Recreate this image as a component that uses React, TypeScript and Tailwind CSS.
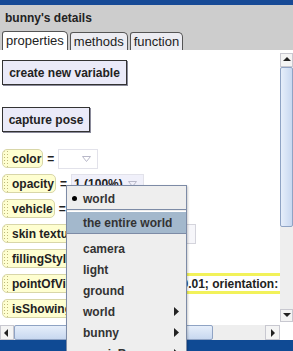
import { ReactNode } from "react";

// little dotted grip on the left edge of each property tile
function Grip() {
  return (
    <span className="h-full w-[7px] shrink-0 rounded-l-[5px] bg-[radial-gradient(#bdb67a_0.8px,transparent_0.9px)] bg-[length:3px_3px]" />
  );
}

function Tile({ label }: { label: string }) {
  return (
    <div className="flex h-[19px] shrink-0 items-center rounded-[5px] border border-[#d8d6a8] bg-[#fefed0] pr-[1px]">
      <Grip />
      <span className="pl-[2px] text-[12px] font-bold leading-none text-[#222]">{label}</span>
    </div>
  );
}

function Combo({ children, w, tint }: { children?: ReactNode; w: string; tint?: boolean }) {
  return (
    <div
      className={`flex h-[20px] shrink-0 items-center justify-between border border-[#e2e2ea] pl-[2px] pr-[6px] ${w} ${
        tint ? "bg-[#f0f0fa]" : "bg-white"
      }`}
    >
      <span className="text-[12px] font-bold text-[#222]">{children}</span>
      <svg width="9" height="6" viewBox="0 0 9 6">
        <path d="M0.5 0.5 L8.5 0.5 L4.5 5.5 Z" fill="none" stroke="#b8b8c8" strokeWidth="1" />
      </svg>
    </div>
  );
}

function Row({ label, children }: { label: string; children?: ReactNode }) {
  return (
    <div className="flex h-[19px] items-center gap-[4px]">
      <Tile label={label} />
      <span className="text-[12px] font-bold text-[#222]">=</span>
      {children}
    </div>
  );
}

function Arrow({ dir }: { dir: "up" | "down" | "left" | "right" }) {
  const d = {
    up: "M1 6 L5 2 L9 6 Z",
    down: "M1 2 L5 6 L9 2 Z",
    left: "M6 1 L2 5 L6 9 Z",
    right: "M3 1 L7 5 L3 9 Z",
  }[dir];
  return (
    <svg width="10" height="10" viewBox="0 0 10 10">
      <path d={d} fill="#222" />
    </svg>
  );
}

function Item({ children, sub, bullet, active }: { children: string; sub?: boolean; bullet?: boolean; active?: boolean }) {
  return (
    <div
      className={`relative flex h-[21px] shrink-0 items-center pl-[16px] pr-[6px] text-[12px] font-bold text-[#333] ${
        active ? "bg-[#a3b8cc]" : ""
      }`}
    >
      {bullet && <span className="absolute left-[5px] top-[8px] h-[5px] w-[5px] rounded-full bg-black" />}
      <span className="flex-1">{children}</span>
      {sub && (
        <svg width="6" height="9" viewBox="0 0 6 9">
          <path d="M0 0 L5 4.5 L0 9 Z" fill="#222" />
        </svg>
      )}
    </div>
  );
}

export default function App() {
  return (
    <div className="relative flex h-[351px] w-[293px] flex-col overflow-hidden bg-[#cdcdcd] font-['Liberation_Sans',Arial,sans-serif]">
      <div className="h-[5px] shrink-0 bg-[#174a96]" />

      {/* header */}
      <div className="flex h-[25px] shrink-0 items-center px-[5px] text-[12px] font-bold text-[#222]">bunny's details</div>

      {/* tabs */}
      <div className="flex h-[20px] shrink-0 items-end gap-[2px] pl-[2px]">
        <div className="flex h-[19px] items-center rounded-tl-[3px] rounded-tr-[5px] border-l border-r border-t border-[#555] bg-white px-[3px] text-[13px] text-[#222]">
          properties
        </div>
        <div className="flex h-[18px] items-center rounded-tl-[3px] rounded-tr-[5px] border-l border-r border-t border-[#555] bg-[#ececf2] px-[3px] text-[13px] text-[#222]">
          methods
        </div>
        <div className="flex h-[18px] items-center rounded-tl-[3px] rounded-tr-[5px] border-l border-r border-t border-[#555] bg-[#ececf2] px-[3px] text-[13px] text-[#222]">
          function
        </div>
      </div>

      {/* body */}
      <div className="flex h-[275px] shrink-0 bg-white">
        <div className="flex w-[280px] flex-col overflow-hidden pl-[2px] pt-[10px]">
          <button className="h-[25px] w-[125px] shrink-0 border border-[#333] bg-[#eaeaf8] text-[12px] font-bold text-[#222] shadow-[1px_1px_0_#8a8a9a]">
            create new variable
          </button>
          <button className="mt-[22px] h-[25px] w-[88px] shrink-0 border border-[#333] bg-[#eaeaf8] text-[12px] font-bold text-[#222] shadow-[1px_1px_0_#8a8a9a]">
            capture pose
          </button>

          <div className="mt-[17px] flex flex-col gap-[6px]">
            <Row label="color">
              <Combo w="w-[40px]" />
            </Row>
            <Row label="opacity">
              <Combo w="w-[73px]" tint>
                1 (100%)
              </Combo>
            </Row>
            <Row label="vehicle">
              <Combo w="w-[80px]" tint>
                bunny
              </Combo>
            </Row>
            <Row label="skin texture">
              <div className="h-[20px] w-[100px] shrink-0 border border-[#d4d4dc] bg-[#f6f6fa]" />
            </Row>
            <Row label="fillingStyle">
              <Combo w="w-[90px]">solid</Combo>
            </Row>
            <Row label="pointOfView">
              <div className="flex h-[21px] w-[260px] shrink-0 items-center whitespace-nowrap border-y-[3px] border-[#f2f25a] bg-white pl-[2px] text-[12px] font-bold text-[#222]">
                position: 0, 0, 0.01; orientation: 0
              </div>
            </Row>
            <Row label="isShowing">
              <Combo w="w-[60px]">true</Combo>
            </Row>
          </div>
        </div>

        {/* vertical scrollbar */}
        <div className="mt-[3px] flex h-[269px] w-[13px] flex-col bg-[#eeeeee]">
          <div className="flex h-[14px] items-center justify-center border border-[#c8c8d0] bg-[#f4f4f4]">
            <Arrow dir="up" />
          </div>
          <div className="h-[160px] rounded-[2px] border border-[#8fa3c4] bg-[linear-gradient(90deg,#e6eefa,#c8d8f0)]" />
          <div className="flex-1" />
          <div className="flex h-[13px] items-center justify-center border border-[#c8c8d0] bg-[#f4f4f4]">
            <Arrow dir="down" />
          </div>
        </div>
      </div>

      {/* horizontal scrollbar */}
      <div className="flex h-[15px] shrink-0 bg-white">
        <div className="flex h-[15px] w-[280px] bg-[#eeeeee]">
          <div className="flex w-[14px] items-center justify-center border border-[#c8c8d0] bg-[#f4f4f4]">
            <Arrow dir="left" />
          </div>
          <div className="w-[199px] rounded-[2px] border border-[#8fa3c4] bg-[linear-gradient(180deg,#e6eefa,#c8d8f0)]" />
          <div className="flex-1" />
          <div className="flex w-[15px] items-center justify-center border border-[#c8c8d0] bg-[#f4f4f4]">
            <Arrow dir="right" />
          </div>
        </div>
      </div>

      <div className="flex-1 bg-[#0f4a94]" />

      {/* popup menu */}
      <div className="absolute left-[66px] top-[185px] flex h-[180px] w-[121px] flex-col border border-[#7d8ba6] bg-[#eeeeee] pt-[2px] shadow-[1px_1px_2px_rgba(0,0,0,0.2)]">
        <Item bullet>world</Item>
        <div className="h-[3px] shrink-0 border-t border-b border-t-[#7d8ba6] border-b-white" />
        <Item active>the entire world</Item>
        <div className="h-[5px] shrink-0 border-t border-[#7d8ba6]" />
        <Item>camera</Item>
        <Item>light</Item>
        <Item>ground</Item>
        <Item sub>world</Item>
        <Item sub>bunny</Item>
        <Item sub>magicBox</Item>
      </div>
    </div>
  );
}
